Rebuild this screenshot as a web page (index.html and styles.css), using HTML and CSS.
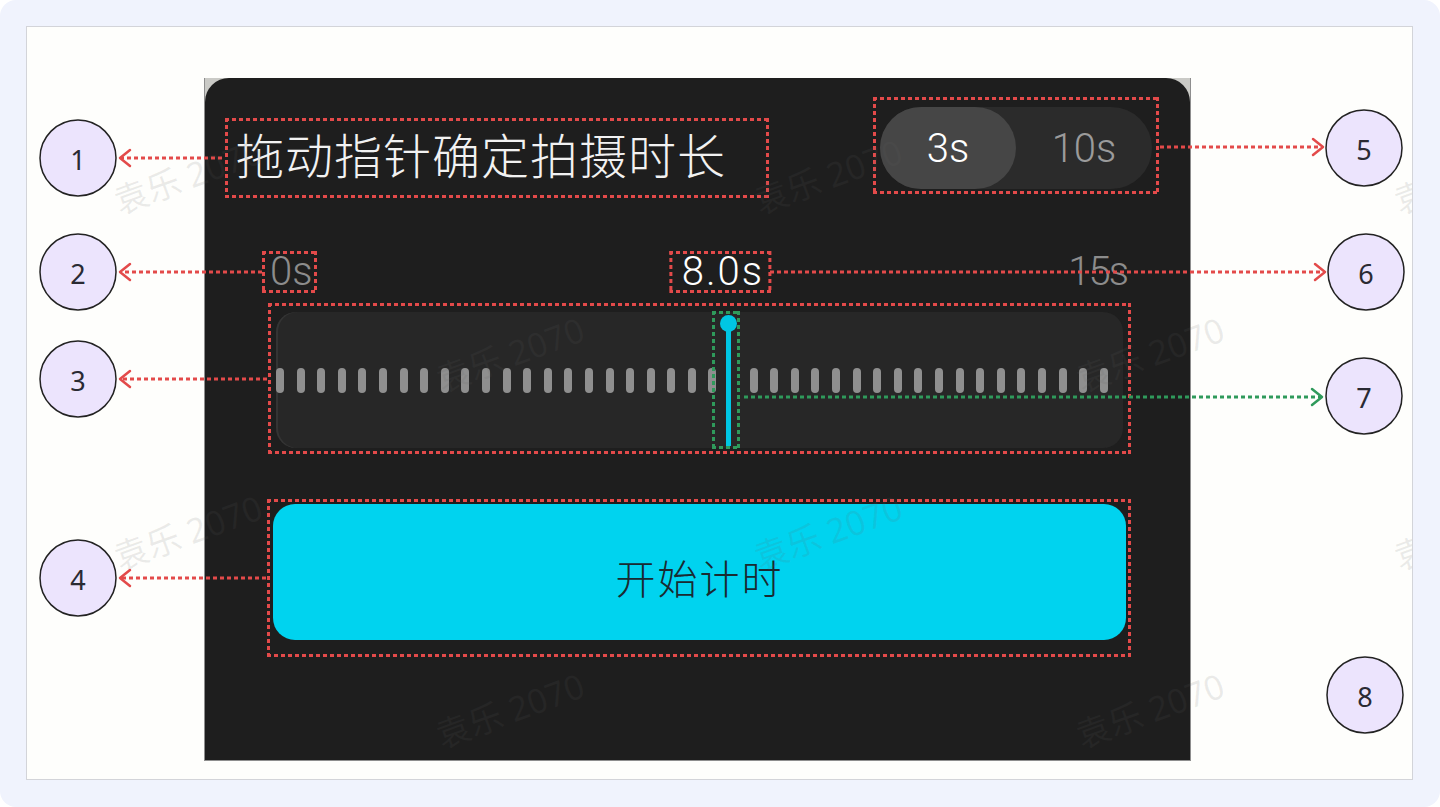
FILE: index.html
```html
<!DOCTYPE html>
<html lang="zh-CN">
<head>
    <meta charset="UTF-8">
    <meta name="viewport" content="width=device-width, initial-scale=1.0">
    <title>拍摄时长</title>
    <link rel="stylesheet" href="styles.css">
</head>
<body>
    <div class="frame">
        <div class="panel">
            <div class="screen">
                <div class="screen-inner">
                    <div class="header">
                        <div class="mark title-mark">
                            <span class="title">拖动指针确定拍摄时长</span>
                        </div>
                        <div class="mark seg-mark">
                            <div class="seg">
                                <div class="seg-item active">3s</div>
                                <div class="seg-item">10s</div>
                            </div>
                        </div>
                    </div>

                    <div class="scale" id="scale">
                        <div class="mark scale-mark"><span class="scale-text">0s</span></div>
                        <div class="mark value-mark" id="value-mark"><span class="scale-text value-text" id="value-text">8.0s</span></div>
                        <span class="scale-text scale-end">15s</span>
                    </div>

                    <div class="mark track-mark">
                        <div class="track" id="track">
                            <div class="pointer" id="pointer">
                                <div class="pointer-knob"></div>
                                <div class="pointer-line"></div>
                            </div>
                        </div>
                    </div>

                    <div class="mark button-mark">
                        <button class="start-btn">开始计时</button>
                    </div>
                </div>
            </div>
            <div class="watermarks" id="watermarks"></div>
        </div>

        <!-- 注释：编号和引线 -->
        <svg class="callouts" width="1440" height="807" viewBox="0 0 1440 807">
            <g class="lead">
                <line x1="222" y1="158" x2="121" y2="158"/>
                <polyline points="130,150 120,158 130,166"/>
                <line x1="262" y1="272" x2="121" y2="272"/>
                <polyline points="130,264 120,272 130,280"/>
                <line x1="267" y1="379" x2="121" y2="379"/>
                <polyline points="130,371 120,379 130,387"/>
                <line x1="266" y1="578" x2="121" y2="578"/>
                <polyline points="130,570 120,578 130,586"/>
                <line x1="1160" y1="147" x2="1322" y2="147"/>
                <polyline points="1313,139 1323,147 1313,155"/>
                <line x1="770" y1="272" x2="1324" y2="272"/>
                <polyline points="1315,264 1325,272 1315,280"/>
            </g>
            <g class="lead green">
                <line x1="744" y1="397" x2="1321" y2="397"/>
                <polyline points="1312,389 1322,397 1312,405"/>
            </g>
            <g class="badge">
                <circle cx="78" cy="158" r="38"/><text x="78" y="159">1</text>
                <circle cx="78" cy="272" r="38"/><text x="78" y="273">2</text>
                <circle cx="78" cy="379" r="38"/><text x="78" y="380">3</text>
                <circle cx="78" cy="578" r="38"/><text x="78" y="579">4</text>
                <circle cx="1364" cy="148" r="38"/><text x="1364" y="149">5</text>
                <circle cx="1366" cy="272" r="38"/><text x="1366" y="273">6</text>
                <circle cx="1364" cy="396" r="38"/><text x="1364" y="397">7</text>
                <circle cx="1365" cy="695" r="38"/><text x="1365" y="696">8</text>
            </g>
        </svg>
    </div>

    <script>
        const maxSeconds = 15;
        const value = 8.0;
        const tickCount = 41;

        // 刻度
        const track = document.getElementById('track');
        const pointer = document.getElementById('pointer');
        const ratio = value / maxSeconds;
        const trackWidth = 847;
        const tickStep = (832 - 8) / (tickCount - 1);
        for (let i = 0; i < tickCount; i++) {
            const tick = document.createElement('span');
            tick.className = 'tick';
            const center = 4 + i * tickStep;
            if (Math.abs(center - ratio * trackWidth) < 7) {
                tick.classList.add('covered');
            }
            track.insertBefore(tick, pointer);
        }

        // 指针和当前值的位置
        pointer.style.left = `calc(${ratio * 100}% - 16px)`;
        document.getElementById('value-mark').style.left = `${ratio * 100}%`;
        document.getElementById('value-text').textContent = `${value.toFixed(1)}s`;

        // 水印
        const wm = document.getElementById('watermarks');
        for (let row = 0; row < 4; row++) {
            const y = 176 + row * 178;
            const start = row % 2 === 0 ? 188 : 510;
            for (let x = start; x < 1500; x += 640) {
                const span = document.createElement('span');
                span.className = 'wm';
                span.textContent = '袁乐 2070';
                span.style.left = (x - 27 - 80) + 'px';
                span.style.top = (y - 27 - 24) + 'px';
                wm.appendChild(span);
            }
        }
    </script>
</body>
</html>
```

FILE: styles.css
```css
/* 全体 */
body {
    margin: 0;
    background-color: #ffffff;
    font-family: "Noto Sans", "Noto Sans CJK SC", sans-serif;
}
.frame {
    position: relative;
    width: 1440px;
    height: 807px;
    box-sizing: border-box;
    padding: 26px 27px 27px 26px;
    background-color: #f0f3fd;
    border-radius: 16px;
}
.panel {
    position: relative;
    height: 100%;
    box-sizing: border-box;
    padding: 51px 0 0 177px;
    background-color: #fefefc;
    border: 1px solid #d3d4d9;
    overflow: hidden;
}

/* 手机画面 */
.screen {
    width: 987px;
    height: 683px;
    box-sizing: border-box;
    background-color: #cacac6;
    border: 1px solid #8e8e8e;
    border-top: 0;
}
.screen-inner {
    height: 100%;
    background-color: #1e1e1e;
    border-radius: 24px 24px 0 0;
}

/* 标注框：方点虚线 */
.mark {
    --dash: #e34a4a;
    box-sizing: border-box;
    border: 3px solid transparent;
    background-origin: border-box;
    background-repeat: no-repeat;
    background-image:
        repeating-linear-gradient(90deg, var(--dash) 0 4px, transparent 4px 7px),
        repeating-linear-gradient(90deg, var(--dash) 0 4px, transparent 4px 7px),
        repeating-linear-gradient(180deg, var(--dash) 0 4px, transparent 4px 7px),
        repeating-linear-gradient(180deg, var(--dash) 0 4px, transparent 4px 7px);
    background-size: 100% 3px, 100% 3px, 3px 100%, 3px 100%;
    background-position: left top, left bottom, left top, right top;
}

.header {
    display: flex;
    justify-content: space-between;
    align-items: flex-start;
    padding: 19px 31px 0 20px;
}
.title-mark {
    width: 544px;
    height: 80px;
    margin-top: 21px;
    display: flex;
    align-items: center;
    padding: 0 0 10px 8px;
}
.title {
    font-family: "Noto Sans CJK SC", sans-serif;
    font-weight: 300;
    font-size: 48px;
    line-height: 56px;
    letter-spacing: 1px;
    color: #f2f2f2;
}
.seg-mark {
    width: 286px;
    height: 97px;
    padding: 7px 4px 2px;
}
.seg {
    display: flex;
    height: 82px;
    border-radius: 41px;
    background-color: #2b2b2b;
}
.seg-item {
    flex: 1;
    display: flex;
    align-items: center;
    justify-content: center;
    border-radius: 41px;
    font-family: Roboto, sans-serif;
    font-weight: 300;
    font-size: 40px;
    color: #9b9b9b;
}
.seg-item.active {
    background-color: #464646;
    color: #ffffff;
}

/* 刻度文字 */
.scale {
    position: relative;
    display: flex;
    justify-content: space-between;
    align-items: center;
    height: 42px;
    margin: 53px 63px 0 57px;
}
.scale-mark {
    height: 42px;
    display: flex;
    align-items: center;
    padding: 0 2px 0 5px;
}
.scale-text {
    font-family: Roboto, sans-serif;
    font-weight: 300;
    font-size: 40px;
    line-height: 36px;
    color: #8c8c8c;
}
.scale-end {
    letter-spacing: -2px;
}
.value-mark {
    position: absolute;
    top: 0;
    height: 42px;
    display: flex;
    align-items: center;
    padding: 0 4px 0 9px;
    transform: translateX(-50%);
    margin-left: -3px;
}
.value-text {
    color: #ffffff;
    letter-spacing: 2px;
}

/* 滑轨 */
.track-mark {
    width: 863px;
    height: 151px;
    margin: 10px 0 0 63px;
    padding: 6px 5px 3px;
}
.track {
    position: relative;
    height: 136px;
    padding-right: 15px;
    display: flex;
    align-items: center;
    justify-content: space-between;
    background-color: #272727;
    border-radius: 20px;
    box-shadow: inset 2px 0 0 #343434;
}
.tick {
    width: 8px;
    height: 25px;
    border-radius: 4px;
    background-color: #8f8f8f;
}
.tick.covered {
    visibility: hidden;
}
.pointer {
    --dash: #2f9a5b;
    position: absolute;
    top: -1px;
    bottom: -1px;
    width: 28px;
    box-sizing: border-box;
    padding: 1px 0 0 6px;
    display: flex;
    flex-direction: column;
    align-items: center;
    border: 3px solid transparent;
    background-origin: border-box;
    background-repeat: no-repeat;
    background-image:
        repeating-linear-gradient(90deg, var(--dash) 0 4px, transparent 4px 7px),
        repeating-linear-gradient(90deg, var(--dash) 0 4px, transparent 4px 7px),
        repeating-linear-gradient(180deg, var(--dash) 0 4px, transparent 4px 7px),
        repeating-linear-gradient(180deg, var(--dash) 0 4px, transparent 4px 7px);
    background-size: 100% 3px, 100% 3px, 3px 100%, 3px 100%;
    background-position: left top, left bottom, left top, right top;
}
.pointer-knob {
    flex-shrink: 0;
    width: 17px;
    height: 17px;
    border-radius: 50%;
    background-color: #00c6e3;
}
.pointer-line {
    flex: 1;
    width: 5px;
    margin-top: -8px;
    background-color: #00c6e3;
}

/* 开始按钮 */
.button-mark {
    width: 864px;
    height: 158px;
    margin: 45px 0 0 62px;
    padding: 2px 2px 14px 3px;
}
.start-btn {
    display: flex;
    align-items: center;
    justify-content: center;
    width: 100%;
    height: 136px;
    padding: 9px 0 0;
    border: none;
    border-radius: 22px;
    background-color: #00d3ef;
    font-family: "Noto Sans CJK SC", sans-serif;
    font-weight: 300;
    font-size: 40px;
    letter-spacing: 2px;
    color: #1a2a31;
}

/* 水印 */
.watermarks {
    position: absolute;
    inset: 0;
    pointer-events: none;
}
.wm {
    position: absolute;
    width: 160px;
    height: 48px;
    line-height: 48px;
    text-align: center;
    white-space: nowrap;
    font-family: "Noto Sans", "Noto Sans CJK SC", sans-serif;
    font-size: 34px;
    color: rgba(97, 97, 97, 0.12);
    transform: rotate(-20deg);
}

/* 编号和引线 */
.callouts {
    position: absolute;
    top: 0;
    left: 0;
    pointer-events: none;
}
.lead line {
    stroke: #e34a4a;
    stroke-width: 3;
    stroke-dasharray: 4 3;
}
.lead polyline {
    fill: none;
    stroke: #e34a4a;
    stroke-width: 2.5;
    stroke-linecap: round;
    stroke-linejoin: round;
}
.lead.green line,
.lead.green polyline {
    stroke: #2f9a5b;
}
.badge circle {
    fill: #ece4fd;
    stroke: #222222;
    stroke-width: 1.5;
}
.badge text {
    font-family: "Noto Sans", sans-serif;
    font-size: 27px;
    fill: #2a2a33;
    text-anchor: middle;
    dominant-baseline: central;
}
```
